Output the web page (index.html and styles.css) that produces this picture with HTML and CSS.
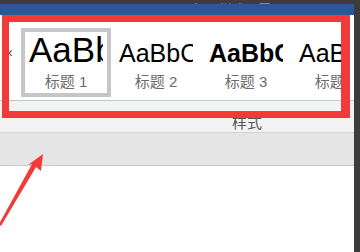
FILE: index.html
```html
<!DOCTYPE html>
<html>
<head>
  <title>标题样式</title>
  <link rel="stylesheet" href="styles.css">
</head>
<body>
  <div class="window">
    <div class="app">
      <div class="titlebar"><span class="title-text">标题样式设置</span></div>
      <div class="tabbar"></div>
      <div class="ribbon">
        <div class="gallery">
          <span class="scroll-left">‹</span>
          <div class="gallery-items">
            <div class="style-item selected">
              <div class="preview big">AaBbC</div>
              <div class="style-name">标题 1</div>
            </div>
            <div class="style-item">
              <div class="preview">AaBbC</div>
              <div class="style-name">标题 2</div>
            </div>
            <div class="style-item">
              <div class="preview bold">AaBbC</div>
              <div class="style-name">标题 3</div>
            </div>
            <div class="style-item">
              <div class="preview">AaBbC</div>
              <div class="style-name">标题 4</div>
            </div>
          </div>
        </div>
        <div class="group-label">样式</div>
      </div>
      <div class="ruler-band"></div>
      <div class="document"></div>
    </div>
    <div class="side-strip"></div>
  </div>

  <!-- annotation overlay -->
  <div class="highlight-box"></div>
  <svg class="arrow" width="60" height="100" viewBox="0 0 60 100">
    <polygon points="43,14 41,31 36,27 1,86 -1,84 32,24 28,25" fill="#f23a3a"/>
  </svg>
</body>
</html>
```

FILE: styles.css
```css
body {
  margin: 0;
  width: 360px;
  height: 252px;
  overflow: hidden;
  background-color: #fff;
  font-family: 'Liberation Sans', 'Noto Sans CJK SC', sans-serif;
}

.window {
  display: flex;
  height: 252px;
}

.app {
  flex: 1;
  display: flex;
  flex-direction: column;
  min-width: 0;
}

.titlebar {
  height: 4px;
  background-color: #3d3d3d;
  overflow: hidden;
  text-align: center;
}

.title-text {
  display: inline-block;
  margin-left: 110px;
  margin-top: -11px;
  font-size: 13px;
  line-height: 15px;
  color: #9a9a9a;
}

.tabbar {
  height: 11px;
  background-color: #2b579a;
}

.ribbon {
  background-color: #f3f3f3;
  border-bottom: 1px solid #d2d2d2;
}

.gallery {
  height: 85px;
  background-color: #fff;
  border-bottom: 1px solid #c6c6c6;
  display: flex;
  align-items: flex-start;
  padding-left: 8px;
}

.scroll-left {
  width: 13px;
  flex-shrink: 0;
  margin-top: 29px;
  font-size: 14px;
  color: #444;
}

.gallery-items {
  width: 322px;
  display: flex;
  overflow: hidden;
}

.style-item {
  width: 90px;
  height: 69px;
  flex-shrink: 0;
  margin-top: 13px;
  box-sizing: border-box;
  border: 4px solid transparent;
}

.style-item.selected {
  border-color: #c6c6c6;
}

.preview {
  height: 38px;
  margin: 0 4px;
  overflow: hidden;
  white-space: nowrap;
  font-size: 25px;
  line-height: 42px;
  color: #000;
}

.preview.big {
  font-size: 35px;
  line-height: 36px;
}

.preview.bold {
  font-weight: bold;
}

.style-name {
  margin-top: 2px;
  text-align: center;
  white-space: nowrap;
  font-size: 15px;
  line-height: 20px;
  color: #6b6b6b;
}

.group-label {
  height: 31px;
  padding-left: 232px;
  font-size: 15px;
  line-height: 44px;
  color: #555;
}

.ruler-band {
  height: 32px;
  background-color: #e5e5e5;
  border-bottom: 1px solid #c9c9c9;
}

.document {
  flex: 1;
  background-color: #fff;
}

.side-strip {
  width: 6px;
  background-color: #3c3c3c;
}

.highlight-box {
  position: absolute;
  left: 2px;
  top: 15px;
  width: 348px;
  height: 103px;
  box-sizing: border-box;
  border: 7px solid #f23a3a;
  border-right-width: 9px;
}

.arrow {
  position: absolute;
  left: 0;
  top: 140px;
}
```
